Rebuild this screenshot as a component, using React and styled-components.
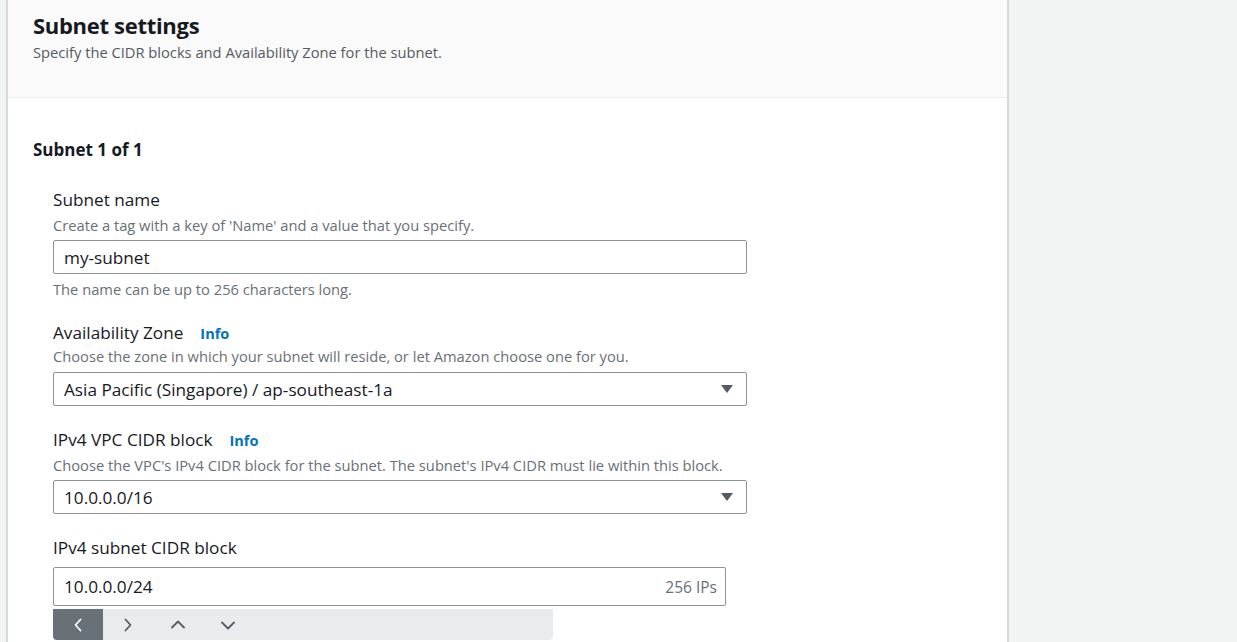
import React from "react";
import styled, { createGlobalStyle } from "styled-components";

const GlobalStyle = createGlobalStyle`
  html, body {
    margin: 0;
    padding: 0;
    background: #f2f3f3;
    font-family: "Open Sans", "Noto Sans", sans-serif;
    color: #16191f;
  }
`;

const Page = styled.div`
  display: flex;
  height: 642px;
  overflow: hidden;
  background: #f2f3f3;
  padding-left: 6px;
`;

const Card = styled.div`
  width: 999px;
  background: #fff;
  border-left: 2px solid #d5d9d9;
  border-right: 2px solid #d5d9d9;
  display: flex;
  flex-direction: column;
`;

const Header = styled.div`
  background: #fafafa;
  border-bottom: 1px solid #eaeded;
  height: 98px;
  box-sizing: border-box;
  padding: 9px 25px 0;
`;

const Title = styled.h2`
  margin: 0;
  font-size: 22px;
  line-height: 32px;
  font-weight: 700;
  letter-spacing: -0.3px;
`;

const Subtitle = styled.p`
  margin: 1px 0 0;
  font-size: 14.7px;
  line-height: 20px;
  color: #545b64;
`;

const Body = styled.div`
  padding: 40px 25px 0;
`;

const SectionTitle = styled.h3`
  margin: 0 0 26px;
  font-size: 17px;
  line-height: 24px;
  font-weight: 700;
`;

const Fields = styled.div`
  padding-left: 20px;
  display: flex;
  flex-direction: column;
`;

const Field = styled.div`
  display: flex;
  flex-direction: column;
  margin-top: ${(p) => p.$gap || 0}px;
`;

const Label = styled.div`
  font-size: 17.2px;
  line-height: 24px;
  display: flex;
  align-items: center;
  gap: 17px;
`;

const Info = styled.a`
  font-size: 14.5px;
  font-weight: 700;
  color: #0073bb;
  text-decoration: none;
  position: relative;
  top: 1px;
`;

const Description = styled.div`
  margin-top: ${(p) => p.$gap ?? 3}px;
  font-size: 14.7px;
  line-height: 20px;
  color: #687078;
`;

const Control = styled.div`
  margin-top: ${(p) => p.$gap || 5}px;
  width: ${(p) => p.$width || 694}px;
  height: ${(p) => p.$height || 34}px;
  box-sizing: border-box;
  border: 1px solid #8d9496;
  border-radius: 2px;
  display: flex;
  align-items: center;
  justify-content: space-between;
  padding: 0 13px 0 10px;
  font-size: 17.2px;
  background: #fff;
`;

const Caret = styled.span`
  width: 0;
  height: 0;
  border-left: 6.5px solid transparent;
  border-right: 6.5px solid transparent;
  border-top: 8px solid #545b64;
`;

const Suffix = styled.span`
  font-size: 15.5px;
  color: #687078;
  margin-right: -5px;
`;

const Constraint = styled.div`
  margin-top: 5px;
  font-size: 14.7px;
  line-height: 20px;
  color: #687078;
`;

const Toolbar = styled.div`
  display: flex;
  width: 500px;
  height: 31px;
  margin-top: 3px;
  background: #e9ebed;
  border-radius: 0 0 4px 4px;
  overflow: hidden;
`;

const ToolButton = styled.button`
  width: 50px;
  height: 100%;
  border: 0;
  padding: 0;
  display: flex;
  align-items: center;
  justify-content: center;
  background: ${(p) => (p.$active ? "#687078" : "transparent")};
  color: ${(p) => (p.$active ? "#fff" : "#545b64")};
`;

const Chevron = ({ d }) => (
  <svg width="16" height="16" viewBox="0 0 16 16" fill="none" stroke="currentColor" strokeWidth="1.8" strokeLinecap="round" strokeLinejoin="round">
    <path d={d} />
  </svg>
);

const App = () => (
  <>
    <GlobalStyle />
    <Page>
      <Card>
        <Header>
          <Title>Subnet settings</Title>
          <Subtitle>Specify the CIDR blocks and Availability Zone for the subnet.</Subtitle>
        </Header>
        <Body>
          <SectionTitle>Subnet 1 of 1</SectionTitle>
          <Fields>
            <Field>
              <Label>Subnet name</Label>
              <Description>Create a tag with a key of 'Name' and a value that you specify.</Description>
              <Control>my-subnet</Control>
              <Constraint>The name can be up to 256 characters long.</Constraint>
            </Field>
            <Field $gap={22}>
              <Label>
                Availability Zone <Info href="#">Info</Info>
              </Label>
              <Description $gap={1}>Choose the zone in which your subnet will reside, or let Amazon choose one for you.</Description>
              <Control $gap={6}>
                Asia Pacific (Singapore) / ap-southeast-1a
                <Caret />
              </Control>
            </Field>
            <Field $gap={22}>
              <Label>
                IPv4 VPC CIDR block <Info href="#">Info</Info>
              </Label>
              <Description>Choose the VPC's IPv4 CIDR block for the subnet. The subnet's IPv4 CIDR must lie within this block.</Description>
              <Control $gap={5}>
                10.0.0.0/16
                <Caret />
              </Control>
            </Field>
            <Field $gap={22}>
              <Label>IPv4 subnet CIDR block</Label>
              <Control $width={673} $height={39} $gap={7}>
                10.0.0.0/24
                <Suffix>256 IPs</Suffix>
              </Control>
              <Toolbar>
                <ToolButton $active><Chevron d="M10.5 2.5 5.5 8l5 5.5" /></ToolButton>
                <ToolButton><Chevron d="M5.5 2.5 10.5 8l-5 5.5" /></ToolButton>
                <ToolButton><Chevron d="M2 10.5 8 4.5l6 6" /></ToolButton>
                <ToolButton><Chevron d="M2 5.5 8 11.5l6-6" /></ToolButton>
              </Toolbar>
            </Field>
          </Fields>
        </Body>
      </Card>
    </Page>
  </>
);

export default App;
